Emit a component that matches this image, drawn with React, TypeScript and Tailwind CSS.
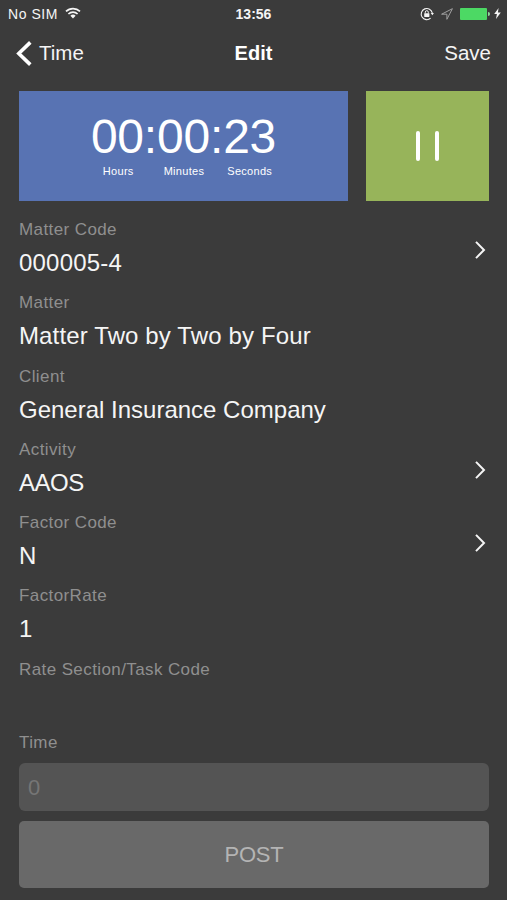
import React, { useState } from 'react';

type Field = {
  label: string;
  value: string;
  hasDetail?: boolean;
  tracking?: string;
};

const fields: Field[] = [
  { label: 'Matter Code', value: '000005-4', hasDetail: true, tracking: 'tracking-[0.2px]' },
  { label: 'Matter', value: 'Matter Two by Two by Four', tracking: 'tracking-[0.13px]' },
  { label: 'Client', value: 'General Insurance Company' },
  { label: 'Activity', value: 'AAOS', hasDetail: true, tracking: 'tracking-[-0.5px]' },
  { label: 'Factor Code', value: 'N', hasDetail: true },
  { label: 'FactorRate', value: '1' },
  { label: 'Rate Section/Task Code', value: '' },
];

const WifiIcon: React.FC<React.SVGProps<SVGSVGElement>> = (props) => (
  <svg viewBox="0 0 16 12" fill="none" stroke="currentColor" strokeWidth="1.7" {...props}>
    <path d="M1 4.4a10 10 0 0 1 14 0" />
    <path d="M3.4 7a6.6 6.6 0 0 1 9.2 0" />
    <path d="M8 11.4 5.4 8.8a3.7 3.7 0 0 1 5.2 0z" fill="currentColor" stroke="none" />
  </svg>
);

const RotationLockIcon: React.FC<React.SVGProps<SVGSVGElement>> = (props) => (
  <svg viewBox="0 0 14 14" fill="none" stroke="currentColor" {...props}>
    <path d="M10.6 11.2A5.6 5.6 0 1 1 12.3 6" strokeWidth="1.1" />
    <path d="M10.7 6h3.2l-1.5 2.3z" fill="currentColor" stroke="none" />
    <rect x="4.2" y="6.2" width="5.2" height="3.8" rx="0.4" fill="currentColor" stroke="none" />
    <path d="M5.3 6.4V5.2a1.5 1.5 0 0 1 3 0v1.2" strokeWidth="1" />
  </svg>
);

const LocationIcon: React.FC<React.SVGProps<SVGSVGElement>> = (props) => (
  <svg viewBox="0 0 12 12" fill="none" stroke="currentColor" strokeWidth="1" strokeLinejoin="round" {...props}>
    <path d="M11.4.7.6 6.2h5.3v5.1z" />
  </svg>
);

const BoltIcon: React.FC<React.SVGProps<SVGSVGElement>> = (props) => (
  <svg viewBox="0 0 7 11" fill="currentColor" {...props}>
    <path d="M4.6 0 .2 6h2.7L2 11l4.8-6.5H3.9z" />
  </svg>
);

const BackIcon: React.FC<React.SVGProps<SVGSVGElement>> = (props) => (
  <svg viewBox="0 0 16 25" fill="none" stroke="currentColor" strokeWidth="3.6" {...props}>
    <path d="M14.3 1.4 2.8 12.5l11.5 11.1" />
  </svg>
);

const ChevronIcon: React.FC<React.SVGProps<SVGSVGElement>> = (props) => (
  <svg viewBox="0 0 11 18" fill="none" stroke="currentColor" strokeWidth="2" {...props}>
    <path d="M1 .9 9 9l-8 8.1" />
  </svg>
);

const StatusBar: React.FC = () => (
  <div className="grid h-7 grid-cols-3 items-center pl-2 pr-[6px] text-sm leading-none">
    <div className="flex items-center">
      <span className="tracking-[0.55px]">No SIM</span>
      <WifiIcon className="ml-[7px] mb-[2px] h-3 w-4" />
    </div>
    <span className="pr-[2px] text-center font-bold">13:56</span>
    <div className="flex items-center justify-end">
      <RotationLockIcon className="mr-[7px] mb-px h-3.5 w-3.5" />
      <LocationIcon className="mr-[7px] mb-px h-3 w-3 text-[#a0a0a0]" />
      <div className="mb-px h-3 w-[27px] rounded-[1px] bg-[#4cd964]" />
      <div className="ml-px mr-1 mb-px h-1 w-[2px] rounded-r-full bg-[#8fd99b]" />
      <BoltIcon className="mb-px h-[11px] w-[7px]" />
    </div>
  </div>
);

const FieldRow: React.FC<{ field: Field }> = ({ field }) => (
  <div className="flex h-[73.3px] items-center justify-between pr-[3px]">
    <div className="h-full">
      <div className="h-[30px] pt-[3px] text-[17px] leading-5 tracking-[0.4px] text-[#8f8f8f]">{field.label}</div>
      <div className={`text-2xl leading-8 ${field.tracking ?? ''}`}>{field.value}</div>
    </div>
    {field.hasDetail && <ChevronIcon className="mb-[7px] h-[18px] w-[11px]" />}
  </div>
);

export default function App() {
  const [time, setTime] = useState('');

  return (
    <div className="flex h-[900px] w-[507px] flex-col overflow-hidden bg-[#3b3b3b] font-['Liberation_Sans',sans-serif] text-[#f5f5f5]">
      <StatusBar />

      <header className="grid h-[63px] grid-cols-3 items-start px-4 pt-3 text-[20.5px] leading-[26px]">
        <button className="flex items-center text-left">
          <BackIcon className="mr-[7px] h-[25px] w-4 text-white" />
          Time
        </button>
        <h1 className="text-center text-[20px] font-bold text-white">Edit</h1>
        <button className="text-right">Save</button>
      </header>

      <main className="flex flex-col pl-[19px] pr-[18px]">
        <section className="flex h-[110px] justify-between">
          <div className="flex w-[329px] flex-col items-center bg-[#5873b3] pt-[22px] text-white">
            <div className="text-5xl leading-[48px] tracking-[-0.2px]">00:00:23</div>
            <div className="mt-[3px] flex pl-2 text-[11px] leading-[14px] tracking-[0.3px]">
              <span className="mr-[30px]">Hours</span>
              <span className="mr-[23px]">Minutes</span>
              <span>Seconds</span>
            </div>
          </div>
          <button className="flex w-[123px] items-center justify-center gap-[15px] bg-[#97b45a]" aria-label="Pause">
            <span className="h-[30px] w-1 rounded-full bg-white" />
            <span className="h-[30px] w-1 rounded-full bg-white" />
          </button>
        </section>

        <section className="pt-4">
          {fields.map((field) => (
            <FieldRow key={field.label} field={field} />
          ))}
        </section>

        <label htmlFor="time" className="h-[33px] pt-[3px] text-[17px] leading-5 tracking-[0.4px] text-[#8f8f8f]">
          Time
        </label>
        <input
          id="time"
          value={time}
          onChange={(e) => setTime(e.target.value)}
          placeholder="0"
          className="h-12 rounded-md bg-[#545454] px-[9px] pt-[2px] text-[22px] outline-none placeholder:text-[#767676]"
        />
        <button className="mt-[10px] h-[67px] rounded-[5px] bg-[#696969] text-[22px] tracking-[-0.2px] text-[#b4b4b4]">POST</button>
      </main>
    </div>
  );
}
